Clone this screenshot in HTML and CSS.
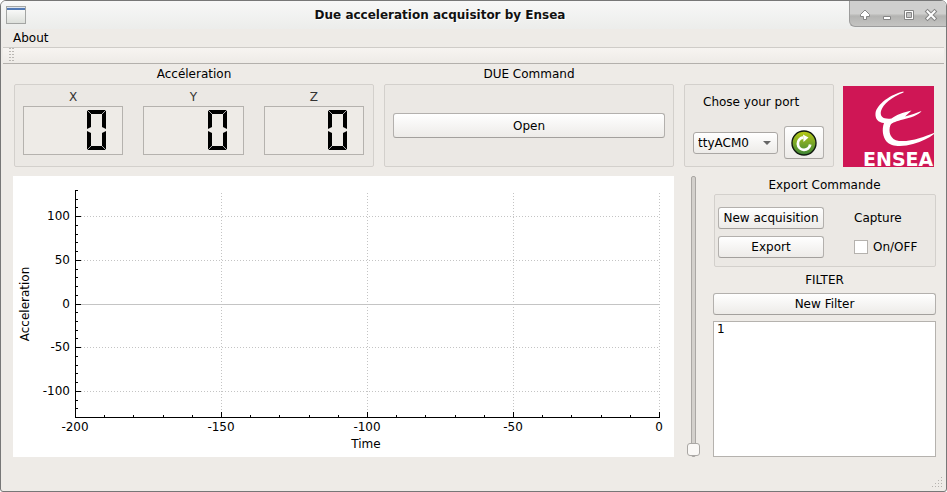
FILE: index.html
```html
<!DOCTYPE html>
<html lang="en">
<head>
<meta charset="utf-8">
<title>Due acceleration acquisitor by Ensea</title>
<link rel="stylesheet" href="styles.css">
</head>
<body>
<svg class="defs" aria-hidden="true">
  <symbol id="digit-zero" viewBox="0 0 19 40">
    <path d="M0 0H19L15 4H4ZM0 0L4 4V17L0 19ZM19 0V19L15 17V4ZM0 21L4 23V36L0 40ZM19 21V40L15 36V23ZM4 36H15L19 40H0Z"/>
    <path d="M0 0L4 4M19 0L15 4M0 40L4 36M19 40L15 36" stroke="#aaa" fill="none"/>
  </symbol>
</svg>
<div class="window">
  <header class="titlebar">
    <svg class="app-icon" viewBox="0 0 20 18" aria-hidden="true">
      <defs><linearGradient id="app" x2="0" y2="1"><stop offset="0" stop-color="#fff"/><stop offset="1" stop-color="#dcdfda"/></linearGradient></defs>
      <rect x=".5" y=".5" width="19" height="17" fill="url(#app)" stroke="#a3a5a3"/>
      <path d="M1 1H19V2H1Z" fill="#dfe5ee"/><path d="M1 2H19V4H1Z" fill="#5279b5"/>
    </svg>
    <h1>Due acceleration acquisitor by Ensea</h1>
    <div class="window-buttons">
      <button aria-label="Shade"><svg viewBox="0 0 14 14"><path d="M7 2L11.500 6.500V8.500H8.500V11.500H5.500V8.500H2.500V6.500Z" fill="#fff" stroke="#858585"/></svg></button>
      <button aria-label="Minimize"><svg viewBox="0 0 14 14"><path d="M3.500 8.500H10.500V11.500H3.500Z" fill="#fff" stroke="#858585"/></svg></button>
      <button aria-label="Maximize"><svg viewBox="0 0 14 14"><path d="M2.500 2.500H11.500V11.500H2.500Z" fill="#fff" stroke="#858585"/><path d="M4.500 4.500H9.500V9.500H4.500Z" fill="#c4c4c4" stroke="#858585"/></svg></button>
      <button aria-label="Close"><svg viewBox="0 0 14 14"><path d="M3.500 3.500L10.500 10.500M10.500 3.500L3.500 10.500" stroke="#858585" stroke-width="4" stroke-linecap="square"/><path d="M3.500 3.500L10.500 10.500M10.500 3.500L3.500 10.500" stroke="#fff" stroke-width="2" stroke-linecap="square"/></svg></button>
    </div>
  </header>
  <nav class="menubar"><a href="#about">About</a></nav>
  <div class="toolbar"><span class="grip"></span></div>

  <main>
    <div class="controls">
      <section class="group">
        <h2>Accéleration</h2>
        <div class="frame readings">
          <div class="reading"><h3>X</h3><div class="lcd"><svg role="img" aria-label="0"><use href="#digit-zero"/></svg></div></div>
          <div class="reading"><h3>Y</h3><div class="lcd"><svg role="img" aria-label="0"><use href="#digit-zero"/></svg></div></div>
          <div class="reading"><h3>Z</h3><div class="lcd"><svg role="img" aria-label="0"><use href="#digit-zero"/></svg></div></div>
        </div>
      </section>
      <section class="group">
        <h2>DUE Command</h2>
        <div class="frame command"><button class="btn tall">Open</button></div>
      </section>
      <div class="side">
        <section class="frame port">
          <label for="port">Chose your port</label>
          <div class="port-row">
            <select id="port"><option>ttyACM0</option></select>
            <button class="btn refresh" aria-label="Refresh ports">
              <svg viewBox="0 0 26 26">
                <defs><linearGradient id="green" x2="0" y2="1"><stop offset="0" stop-color="#b9cb16"/><stop offset="1" stop-color="#3c8437"/></linearGradient></defs>
                <circle cx="13" cy="13" r="12" fill="url(#green)" stroke="#111a10" stroke-width="1.400"/>
                <path d="M12 7.500A6.200 6.200 0 1 0 19.200 14.500" fill="none" stroke="#fff" stroke-width="2.800"/>
                <path d="M12 4.500L17.500 7.500L12.500 12Z" fill="#fff"/>
              </svg>
            </button>
          </div>
        </section>
        <svg class="logo" viewBox="0 0 91 81" role="img" aria-label="ENSEA">
          <rect width="91" height="81" fill="#cf1655"/>
          <path fill="#fff" d="M60.500 5.500C48 8 34 18 32.500 27C32 33 35 36.500 41 37C38.500 44 40 51 43.500 55.500C48 61 60 61 70 58C79 55.500 86 52 91 48V47C82 50.500 68 56 56 55C47 54 45 45 47.500 39C49 36.500 54 35 60 33.500C67 32 76 29 78.500 25C73 27 68 29 62 30.500L68.500 24.500C61 26 53 29 48.500 32.500C41 33.500 36.500 31 38 25C40 18 49 11 60.500 6.500Z"/>
          <text x="20" y="80">ENSEA</text>
        </svg>
      </div>
    </div>

    <div class="workspace">
      <svg class="plot" viewBox="0 0 661 281" role="img" aria-label="Acceleration over time">
        <rect width="661" height="281" fill="#fff"/>
        <g class="lines">
          <path class="grid" d="M68 40.500H646M68 84.500H646M68 171.500H646M68 215.500H646M208.500 17V241M354.500 17V241M500.500 17V241M646.500 17V241"/>
          <path class="zero" d="M68 128.500H646"/>
          <path class="axis" d="M62.500 14V241.500H647M63 40.500H68M63 84.500H68M63 128.500H68M63 171.500H68M63 215.500H68M208.500 241V236M354.500 241V236M500.500 241V236M646.500 241V236"/>
          <path class="axis" d="M63 14.500h2M63 23.500h2M63 31.500h2M63 49.500h2M63 58.500h2M63 66.500h2M63 75.500h2M63 93.500h2M63 101.500h2M63 110.500h2M63 119.500h2M63 136.500h2M63 145.500h2M63 154.500h2M63 162.500h2M63 180.500h2M63 189.500h2M63 197.500h2M63 206.500h2M63 224.500h2M63 232.500h2"/>
          <path class="axis" d="M91.500 241v-2M120.500 241v-2M150.500 241v-2M179.500 241v-2M237.500 241v-2M266.500 241v-2M296.500 241v-2M325.500 241v-2M383.500 241v-2M412.500 241v-2M442.500 241v-2M471.500 241v-2M529.500 241v-2M558.500 241v-2M588.500 241v-2M617.500 241v-2"/>
        </g>
        <g text-anchor="end">
          <text x="57" y="44">100</text><text x="57" y="88">50</text><text x="57" y="132">0</text><text x="57" y="175">-50</text><text x="57" y="219">-100</text>
        </g>
        <g text-anchor="middle">
          <text x="62" y="255">-200</text><text x="208" y="255">-150</text><text x="354" y="255">-100</text><text x="500" y="255">-50</text><text x="646" y="255">0</text>
          <text x="353" y="272">Time</text>
          <text transform="translate(16 128) rotate(-90)">Acceleration</text>
        </g>
      </svg>
      <input class="zoom" type="range" min="0" max="100" value="0" aria-label="Vertical scale">
      <aside>
        <h2>Export Commande</h2>
        <div class="frame export">
          <button class="btn">New acquisition</button><span class="capture">Capture</span>
          <button class="btn">Export</button><label class="capture"><input type="checkbox">On/OFF</label>
        </div>
        <h2 class="filter-title">FILTER</h2>
        <button class="btn">New Filter</button>
        <textarea aria-label="Filters">1</textarea>
      </aside>
    </div>
  </main>
  <footer>
    <svg viewBox="0 0 12 12" aria-hidden="true"><path d="M9 0h1v1h-1zM6 3h1v1h-1zM9 3h1v1h-1zM3 6h1v1h-1zM6 6h1v1h-1zM9 6h1v1h-1zM0 9h1v1h-1zM3 9h1v1h-1zM6 9h1v1h-1zM9 9h1v1h-1z"/></svg>
  </footer>
</div>
</body>
</html>
```

FILE: styles.css
```css
* { box-sizing: border-box; }
body { margin: 0; background: #fff; }
body, button, select, textarea, input, svg text {
  font-family: "DejaVu Sans", sans-serif;
  font-size: 12px;
  color: #000;
}
h1, h2, h3 { margin: 0; font-size: 12px; font-weight: normal; text-align: center; line-height: 16px; }
svg { display: block; }
.defs { position: absolute; width: 0; height: 0; }

.window {
  display: flex;
  flex-direction: column;
  min-height: 100vh;
  border: 1px solid #777;
  border-radius: 6px 6px 3px 3px;
  background: #eeebe7;
  overflow: hidden;
}

.titlebar {
  display: grid;
  grid-template-columns: 30px 1fr 97px;
  align-items: center;
  height: 28px;
  background: linear-gradient(#f7f7f7, #ecedeb);
}
.app-icon { width: 20px; height: 18px; margin-left: 5px; }
.titlebar h1 { font-weight: bold; color: #111; text-shadow: 1px 1px #fff; }
.window-buttons {
  align-self: start;
  display: flex;
  justify-content: space-between;
  height: 26px;
  padding: 0 8px;
  border: solid #9c9c9c;
  border-width: 0 0 1px 1px;
  border-radius: 0 0 0 6px;
  background: linear-gradient(#cfcfce 50%, #b4b4b2 60%, #c4c4c2);
}
.window-buttons button { width: 14px; padding: 0; border: 0; background: none; }
.window-buttons svg { width: 14px; height: 14px; margin-top: 2px; }

.menubar { height: 18px; padding-left: 12px; line-height: 18px; }
.menubar a { color: #000; text-decoration: none; }
.toolbar {
  height: 17px;
  margin: 0 2px;
  padding-left: 5px;
  border-top: 1px solid #cfccc8;
  border-bottom: 1px solid #b3b0ac;
  background: linear-gradient(#f7f4f1, #eeebe7);
}
.grip {
  display: block;
  width: 6px;
  height: 15px;
  background: conic-gradient(from 90deg at 1px 1px, transparent 270deg, #bab7b3 0) 0 0 / 3px 3px;
}

main { padding: 2px 10px 0 12px; }
.controls {
  display: grid;
  grid-template-columns: 360fr 290fr 252px;
  gap: 10px;
  padding-left: 1px;
}
.group { display: flex; flex-direction: column; gap: 2px; }
.frame {
  border: 1px solid #d3d0cc;
  border-radius: 2px;
  background: #ebe8e4;
}
.readings {
  display: grid;
  grid-template-columns: repeat(3, 1fr);
  gap: 20px;
  padding: 4px 9px 11px 8px;
}
.reading { color: #333; }
.reading h3 { margin-bottom: 1px; }
.lcd {
  display: flex;
  justify-content: flex-end;
  height: 49px;
  padding: 3px 16px 0 0;
  border: 1px solid #b5b2ae;
  background: #eeebe7;
}
.lcd svg { width: 19px; height: 40px; }
.command { flex: 1; display: flex; align-items: center; padding: 0 8px; }

.btn {
  width: 100%;
  height: 22px;
  padding: 0;
  border: 1px solid #b3b0ad;
  border-bottom-color: #a3a09d;
  border-radius: 3px;
  background: linear-gradient(#fff, #edebe8);
  white-space: nowrap;
}
.tall { height: 25px; }

.side { display: flex; gap: 9px; padding-top: 18px; }
.port {
  display: flex;
  flex-direction: column;
  justify-content: space-between;
  width: 150px;
  padding: 9px 9px 7px 8px;
}
.port label { line-height: 16px; padding-left: 10px; }
.port-row { position: relative; display: flex; align-items: center; gap: 6px; }
select {
  appearance: none;
  flex: 1;
  min-width: 0;
  height: 22px;
  padding: 0 4px;
  border: 1px solid #aaa7a4;
  border-radius: 3px;
  background: linear-gradient(#fff, #edebe8);
}
.port-row::after {
  content: "";
  position: absolute;
  right: 53px;
  top: 15px;
  border: 4px solid transparent;
  border-top-color: #666;
  pointer-events: none;
}
.refresh { width: 40px; height: 33px; }
.refresh svg { width: 26px; height: 26px; margin: 0 auto; }
.logo { width: 91px; height: 81px; margin-top: 2px; overflow: visible; }
.logo text { font-size: 19px; font-weight: bold; fill: #fff; }

.workspace { display: flex; gap: 13px; margin-top: 9px; }
.plot { flex: 1; min-width: 0; }
.lines { shape-rendering: crispEdges; fill: none; }
.grid { stroke: #c4c4c4; stroke-dasharray: 1 2; }
.zero { stroke: #c4c4c4; }
.axis { stroke: #000; }

.zoom {
  appearance: none;
  writing-mode: vertical-lr;
  direction: rtl;
  width: 13px;
  height: auto;
  margin: 0;
  background: none;
}
.zoom::-webkit-slider-runnable-track {
  width: 5px;
  border: 1px solid #aaa7a4;
  border-radius: 2px;
  background: #d3d0cc;
}
.zoom::-webkit-slider-thumb {
  appearance: none;
  width: 13px;
  height: 13px;
  margin-left: -5px;
  border: 1px solid #aaa7a4;
  border-radius: 3px;
  background: #faf8f6;
}

aside { display: flex; flex-direction: column; width: 223px; }
aside h2 { line-height: 18px; }
.export {
  display: grid;
  grid-template-columns: 106px 1fr;
  align-items: center;
  gap: 7px 30px;
  margin: 0 0 4px 1px;
  padding: 12px 3px 8px;
}
.capture { display: flex; align-items: center; gap: 5px; }
.capture input {
  appearance: none;
  width: 14px;
  height: 14px;
  margin: 0;
  border: 1px solid #b5b2ae;
  background: #fff;
}
.filter-title { margin-bottom: 4px; }
textarea {
  flex: 1;
  margin-top: 6px;
  padding: 0 3px;
  border: 1px solid #b5b2ae;
  border-radius: 0;
  background: #fff;
  resize: none;
}
footer { flex: 1; display: flex; justify-content: flex-end; align-items: flex-end; padding: 0 2px 2px; }
footer svg { width: 12px; height: 12px; fill: #b5b2ae; }
```
